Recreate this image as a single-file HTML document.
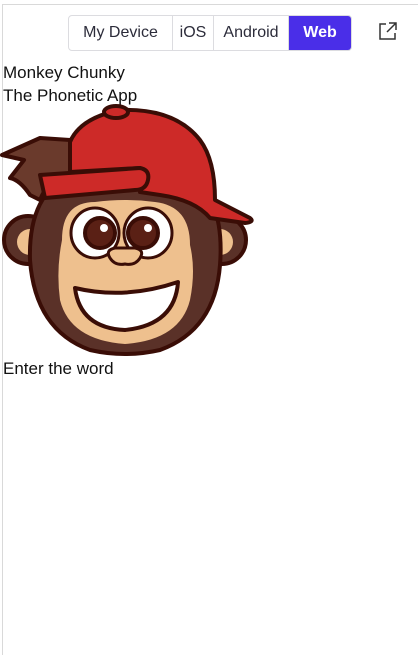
<!DOCTYPE html>
<html><head><meta charset="utf-8"><style>
html,body{margin:0;padding:0;background:#fff;width:418px;height:640px;overflow:hidden;font-family:"Liberation Sans",sans-serif}
.frame{position:absolute;left:2px;top:4px;width:430px;height:650px;border-left:1px solid #d9d9d9;border-top:1px solid #d9d9d9}
.seg{position:absolute;left:68px;top:15px;height:34px;display:flex;border:1px solid #dcdce0;border-radius:4px;overflow:hidden;font-size:16px;color:#2c2c3a}
.seg div{display:flex;align-items:center;justify-content:center;border-right:1px solid #dcdce0;height:34px}
.seg .web{background:#4a2ee8;color:#fff;font-weight:bold;border:none}
.txt{position:absolute;left:3px;font-size:17px;color:#111}
</style></head><body>
<div class="frame"></div>
<div class="seg">
<div style="width:103px">My Device</div>
<div style="width:40px">iOS</div>
<div style="width:74px">Android</div>
<div class="web" style="width:62px">Web</div>
</div>
<svg style="position:absolute;left:378px;top:21px" width="20" height="20" viewBox="0 0 20 20" fill="none" stroke="#333" stroke-width="1.5"><path d="M8 3H2v15h15v-6"/><path d="M11 2h7v7M18 2L9 11"/></svg>
<div class="txt" style="top:63px">Monkey Chunky</div>
<div class="txt" style="top:86px">The Phonetic App</div>
<svg style="position:absolute;left:0;top:100px" width="260" height="260" viewBox="0 0 260 260">
<g stroke="#3a0d06" stroke-width="4" stroke-linejoin="round">
<circle cx="28" cy="140" r="24" fill="#5a3128"/>
<circle cx="222" cy="140" r="24" fill="#5a3128"/>
<circle cx="30" cy="142" r="13" fill="#eec08e" stroke="none"/>
<circle cx="220" cy="142" r="13" fill="#eec08e" stroke="none"/>
<path d="M30 160 Q28 95 70 75 L190 75 Q225 100 220 165 Q215 230 160 250 Q125 258 90 250 Q35 230 30 160Z" fill="#5a3128"/>
<path d="M62 140 Q62 102 95 102 Q125 98 155 102 Q190 106 190 145 Q196 170 190 200 Q180 240 125 244 Q70 240 60 200 Q56 170 62 140Z" fill="#eec08e" stroke="none"/>
<ellipse cx="95" cy="133" rx="24" ry="25" fill="#fff" stroke-width="3"/>
<ellipse cx="148" cy="133" rx="24" ry="25" fill="#fff" stroke-width="3"/>
<circle cx="100" cy="133" r="15" fill="#5a2015"/>
<circle cx="143" cy="133" r="15" fill="#5a2015"/>
<circle cx="104" cy="128" r="4" fill="#fff" stroke="none"/>
<circle cx="148" cy="128" r="4" fill="#fff" stroke="none"/>
<path d="M110 158 Q105 150 115 148 L135 148 Q145 150 140 158 Q135 166 125 164 Q115 166 110 158Z" fill="#eec08e" stroke-width="3"/>
<path d="M75 188 Q125 200 178 182 Q175 225 125 230 Q80 228 75 188Z" fill="#fff"/>
<path d="M24 60 L2 55 L40 38 L70 40 L130 35 L145 45 L145 80 L70 82 Q50 75 40 100 L30 95 Q20 80 10 78Z" fill="#6a3a2c"/>
<path d="M70 42 Q80 18 120 10 Q175 8 200 40 Q215 60 215 100 L250 118 Q255 122 245 123 L210 118 Q195 100 160 95 L140 92 L145 80 Q140 72 140 68 L70 72Z" fill="#cd2a28"/>
<path d="M40 75 L140 68 Q150 70 148 80 Q146 90 135 90 L45 98 Z" fill="#cd2a28"/>
<ellipse cx="116" cy="12" rx="12" ry="6" fill="#cd2a28"/>
</g>
</svg>
<div class="txt" style="top:359px">Enter the word</div>
</body></html>
